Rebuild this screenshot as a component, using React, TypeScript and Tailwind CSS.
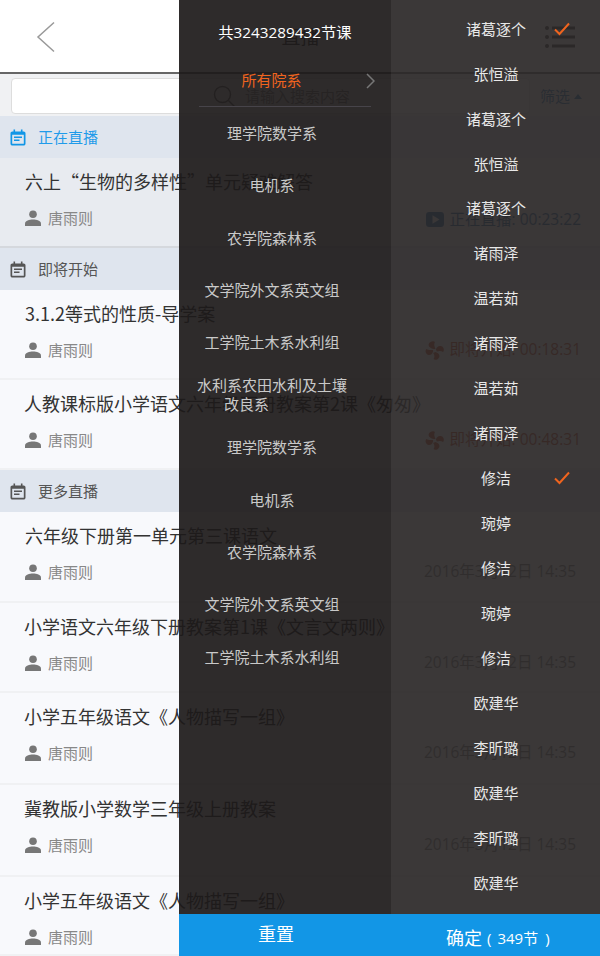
import React from 'react';

const CJK = { fontFamily: '"Open Sans", "Noto Sans CJK SC", "Noto Sans", sans-serif' };

type Status = { kind: 'live' | 'soon' | 'date'; text: string };
type Lesson = { title: string; status: Status; height: string; bg?: string; indent?: string };

const DATE: Status = { kind: 'date', text: '2016年3月12日 14:35' };

const liveLessons: Lesson[] = [
  { title: '六上“生物的多样性”单元疑难解答', status: { kind: 'live', text: '正在直播: 00:23:22' }, height: 'h-[90px]', bg: 'bg-[#e8ebf0] border-[#d5d8dd]' },
];
const soonLessons: Lesson[] = [
  { title: '3.1.2等式的性质-导学案', status: { kind: 'soon', text: '即将开始: 00:18:31' }, height: 'h-[90px]' },
  { title: '人教课标版小学语文六年级下册教案第2课《匆匆》', status: { kind: 'soon', text: '即将开始: 00:48:31' }, height: 'h-[90px]', indent: 'pl-[24px]' },
];
const moreLessons: Lesson[] = [
  { title: '六年级下册第一单元第三课语文', status: DATE, height: 'h-[91px]' },
  { title: '小学语文六年级下册教案第1课《文言文两则》', status: DATE, height: 'h-[90px]', indent: 'pl-[24px]' },
  { title: '小学五年级语文《人物描写一组》', status: DATE, height: 'h-[92px]', indent: 'pl-[24px]' },
  { title: '冀教版小学数学三年级上册教案', status: DATE, height: 'h-[92px]', indent: 'pl-[24px]' },
  { title: '小学五年级语文《人物描写一组》', status: DATE, height: 'h-[79px]', indent: 'pl-[24px]' },
];

const departments = [
  '理学院数学系',
  '电机系',
  '农学院森林系',
  '文学院外文系英文组',
  '工学院土木系水利组',
  '水利系农田水利及土壤',
  '理学院数学系',
  '电机系',
  '农学院森林系',
  '文学院外文系英文组',
  '工学院土木系水利组',
];

const teachers = [
  '诸葛逐个', '张恒溢', '诸葛逐个', '张恒溢', '诸葛逐个',
  '诸雨泽', '温若茹', '诸雨泽', '温若茹', '诸雨泽',
  '修洁', '琬婷', '修洁', '琬婷', '修洁',
  '欧建华', '李昕璐', '欧建华', '李昕璐', '欧建华',
];

function CalendarIcon({ className }: { className: string }) {
  return (
    <svg viewBox="0 0 16 16" className={className} fill="currentColor">
      <path d="M3.500 0h1.600v2h5.800V0h1.600v2h1.200C14.600 2 15.500 2.800 15.500 3.800v10.400c0 1-.9 1.800-1.800 1.800H2.300C1.400 16 .5 15.200 .5 14.200V3.800C.5 2.800 1.400 2 2.300 2h1.200zM2.200 5.200v8.700c0 .2.1.4.4.4h10.800c.3 0 .4-.2.4-.4V5.200zM4 7h8v1.500H4zm0 3h5.500v1.500H4z" fillRule="evenodd" />
    </svg>
  );
}

function UserIcon() {
  return (
    <svg viewBox="0 0 16 16" className="w-[16px] h-[16px] text-[#777]" fill="currentColor">
      <circle cx="8" cy="4.300" r="3.800" />
      <path d="M0 16v-2.500C0 10.800 4.500 9.500 8 9.500s8 1.300 8 4V16z" />
    </svg>
  );
}

function PlayIcon() {
  return (
    <svg viewBox="0 0 18 15" className="w-[18px] h-[15px] text-[#14609e]" fill="currentColor">
      <path fillRule="evenodd" d="M3 0h12c1.700 0 3 1.300 3 3v9c0 1.700-1.300 3-3 3H3c-1.700 0-3-1.300-3-3V3c0-1.700 1.300-3 3-3zm3.500 3.300v8.400L13.500 7.500z" />
    </svg>
  );
}

function FanIcon() {
  return (
    <svg viewBox="0 0 20 20" className="w-[19px] h-[19px] text-[#c8451f]" fill="currentColor">
      <path d="M9 8.500C6 7.500 3 6 4 3c1-2.500 5-3.500 6.500-2C9 3 10 6 11 8.500z" />
      <path d="M11.500 9C12.500 6 14.500 4.500 17.500 5.500c2.500 1 3 4.500 1.500 6-2-1.500-4.500-1-6.500-.5z" />
      <path d="M11 11.500c3 1 5 3 4 5.500-1 2.500-4.500 3.500-6 2 1.500-2 1-5-.5-6.500z" />
      <path d="M8.500 11c-1 3-3 4.500-5.500 3.500C.5 13.500 0 10 1.500 8.500c2 1.500 5 1 7 1z" />
    </svg>
  );
}

function SectionHeader({ label, active, height }: { label: string; active?: boolean; height: string }) {
  return (
    <div className={`${height} flex items-center bg-[#dfe5ee] pl-[10px] gap-[12px]`}>
      <CalendarIcon className={`w-[16px] h-[17px] ${active ? 'text-[#1296e6]' : 'text-[#555]'}`} />
      <span className={`text-[15px] ${active ? 'text-[#1f9bea]' : 'text-[#555]'}`}>{label}</span>
    </div>
  );
}

function StatusText({ status }: { status: Status }) {
  if (status.kind === 'date') {
    return <span className="mr-[5px] text-[15.500px] text-[#777]">{status.text}</span>;
  }
  return (
    <span className={`flex items-center gap-[6px] text-[15.500px] ${status.kind === 'live' ? 'mt-[3px] text-[#14609e]' : 'text-[#c8451f]'}`}>
      {status.kind === 'live' ? <PlayIcon /> : <FanIcon />}
      {status.text}
    </span>
  );
}

function LessonRow({ lesson }: { lesson: Lesson }) {
  return (
    <div className={`${lesson.height} ${lesson.bg ?? 'bg-[#f8f9fc] border-[#f0f1f3]'} ${lesson.indent ?? 'pl-[25px]'} pr-[19px] border-b-[2px] overflow-hidden`}>
      <div className="pt-[10px] h-[45px] font-['Noto_Sans_CJK_SC',sans-serif] text-[18px] leading-[26px] text-[#333] whitespace-nowrap">{lesson.title}</div>
      <div className="flex items-center justify-between h-[30px]">
        <span className={`flex items-center gap-[7px] text-[15px] text-[#888] ${lesson.indent ? 'ml-[1px]' : ''}`}>
          <UserIcon />
          唐雨则
        </span>
        <StatusText status={lesson.status} />
      </div>
    </div>
  );
}

function CheckMark({ className }: { className: string }) {
  return (
    <svg viewBox="0 0 16 14" className={className} fill="none" stroke="#f0641e" strokeWidth="2">
      <path d="M1 7.500l4.500 4.500L15 1.500" />
    </svg>
  );
}

export default function App() {
  return (
    <div className="relative w-[600px] h-[956px] overflow-hidden bg-[#f8f9fc]" style={CJK}>
      {/* page under the filter panel */}
      <div className="flex flex-col h-full">
        <header className="h-[74px] bg-white border-b-2 border-[#666] flex items-center justify-between pl-[36px] pr-[25px] pt-[2px]">
          <svg viewBox="0 0 20 32" className="w-[20px] h-[32px]" fill="none" stroke="#999" strokeWidth="1.500">
            <path d="M18 1.500L2 16l16 14.500" />
          </svg>
          <span className="text-[19px] text-[#333]">直播</span>
          <svg viewBox="0 0 30 24" className="w-[30px] h-[24px]" fill="#333">
            <circle cx="2" cy="3" r="2" />
            <circle cx="2" cy="12" r="2" />
            <circle cx="2" cy="21" r="2" />
            <rect x="7" y="1.500" width="23" height="3" />
            <rect x="7" y="10.500" width="23" height="3" />
            <rect x="7" y="19.500" width="23" height="3" />
          </svg>
        </header>
        <div className="h-[42px] bg-[#f0f1f3] flex items-center pl-[11px] pr-[18px] gap-[10px] pt-[2px]">
          <div className="flex-1 h-[36px] bg-white border border-[#ddd] rounded-[4px] flex items-center pl-[201px] gap-[10px]">
            <svg viewBox="0 0 22 22" className="w-[22px] h-[22px]" fill="none" stroke="#777" strokeWidth="1.500">
              <circle cx="9.500" cy="9.500" r="8" />
              <path d="M15.500 15.500l6 6" />
            </svg>
            <span className="text-[15px] text-[#999]">请输入搜索内容</span>
          </div>
          <span className="flex items-center gap-[4px] text-[15px] text-[#1a6fb5]">
            筛选
            <span className="w-0 h-0 border-x-[4px] border-x-transparent border-b-[5px] border-b-[#1a6fb5]" />
          </span>
        </div>
        <SectionHeader label="正在直播" active height="h-[42px]" />
        {liveLessons.map((l) => <LessonRow key={l.title} lesson={l} />)}
        <SectionHeader label="即将开始" height="h-[42px]" />
        {soonLessons.map((l) => <LessonRow key={l.title} lesson={l} />)}
        <SectionHeader label="更多直播" height="h-[42px]" />
        {moreLessons.map((l, i) => <LessonRow key={i} lesson={l} />)}
      </div>

      {/* filter panel, lies over the page */}
      <div className="absolute top-0 right-0 bottom-0 w-[421px] flex flex-col">
        <div className="flex-1 flex overflow-hidden">
          <div className="w-[212px] bg-[#1c1919]/92 flex flex-col px-[20px] pt-[6px]">
            <div className="h-[52px] shrink-0 flex items-center justify-center text-[15.300px] text-white">共3243289432节课</div>
            <div className="h-[49.200px] shrink-0 flex items-center justify-center relative border-b border-[#47444a] pr-[27px] pb-[4px] text-[15px] text-[#f0641e]">
              所有院系
              <svg viewBox="0 0 9 16" className="absolute right-[-4px] top-[15px] w-[9px] h-[16px]" fill="none" stroke="#777" strokeWidth="1.500">
                <path d="M1 1l7 7-7 7" />
              </svg>
            </div>
            {departments.map((d, i) => (
              <div key={i} className="h-[52.400px] shrink-0 flex flex-col items-center justify-center pr-[26px] text-[15px] leading-[19px] text-[#c9c9c9] whitespace-nowrap">
                <span>{d}</span>
                {i === 5 && <span className="mr-[51px]">改良系</span>}
              </div>
            ))}
          </div>
          <div className="flex-1 bg-[#2a2727]/92 pt-[6.500px]">
            {teachers.map((t, i) => (
              <div key={i} className="h-[44.950px] flex items-center justify-center relative text-[15px] text-[#e8e8e8]">
                <span className="ml-[1px]">{t}</span>
                {(i === 0 || i === 10) && (
                  <CheckMark className="absolute right-[30px] top-[15px] w-[16px] h-[14px]" />
                )}
              </div>
            ))}
          </div>
        </div>
        <div className="h-[42px] shrink-0 flex bg-[#1296e6] text-white">
          <button className="w-[194px] text-[18px] pb-[1px]">重置</button>
          <button className="flex-1 flex items-center justify-start pl-[73px] pt-[6px] text-[18px]">
            确定
            <span className="flex ml-[5px] text-[15px]">
              <span className="mr-[6px]">(</span>349节<span className="ml-[7px]">)</span>
            </span>
          </button>
        </div>
      </div>
    </div>
  );
}
